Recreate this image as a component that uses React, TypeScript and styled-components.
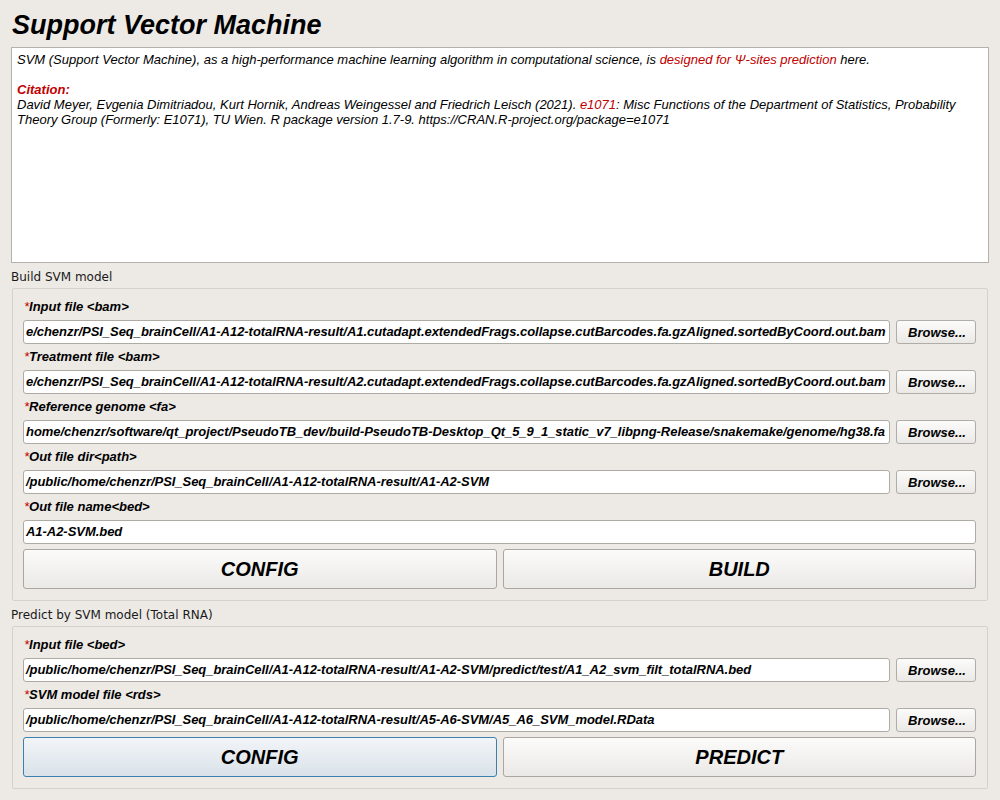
import styled, { createGlobalStyle } from "styled-components";

const GlobalStyle = createGlobalStyle`
  html, body {
    margin: 0;
    padding: 0;
    background: #edeae6;
  }
  * {
    box-sizing: border-box;
  }
`;

const Page = styled.div`
  width: 1000px;
  height: 800px;
  padding: 8px 11px 0 11px;
  background: #edeae6;
  font-family: "Liberation Sans", Arial, sans-serif;
  color: #000;
  overflow: hidden;
`;

const Title = styled.h1`
  margin: 0 0 5px 1px;
  height: 34px;
  font-size: 27px;
  line-height: 35px;
  font-weight: bold;
  font-style: italic;
`;

const Browser = styled.div`
  height: 216px;
  background: #fff;
  border: 1px solid #b4b0aa;
  padding: 4px 5px;
  font-size: 13px;
  line-height: 15px;
  font-style: italic;
`;

const Para = styled.p`
  margin: 0;
  min-height: 15px;
`;

const Red = styled.span<{ $bold?: boolean }>`
  color: #c00000;
  font-weight: ${(p) => (p.$bold ? "bold" : "normal")};
`;

const GroupTitle = styled.div`
  margin-top: 6px;
  margin-bottom: 3px;
  height: 16px;
  line-height: 16px;
  font-family: "DejaVu Sans", sans-serif;
  font-size: 12px;
  color: #1a1a1a;
`;

const Group = styled.div`
  margin: 0 1px;
  border: 1px solid #d5d1cb;
  border-radius: 2px;
  padding: 10px 11px 11px 10px;
  display: flex;
  flex-direction: column;
  gap: 5px;
`;

const Label = styled.div`
  height: 16px;
  line-height: 16px;
  font-size: 13px;
  font-weight: bold;
  font-style: italic;
  padding-left: 1px;
`;

const Star = styled.span`
  color: #c00000;
  font-weight: normal;
`;

const Row = styled.div`
  display: flex;
  gap: 6px;
`;

const Field = styled.div`
  flex: 1;
  height: 24px;
  background: #fff;
  border: 1px solid #aeaaa4;
  border-radius: 3px;
  padding: 0 2px;
  font-size: 13px;
  line-height: 22px;
  font-weight: bold;
  font-style: italic;
  letter-spacing: -0.04px;
  white-space: nowrap;
  overflow: hidden;
`;

const BrowseButton = styled.button`
  width: 80px;
  height: 24px;
  padding: 0 0 0 2px;
  border: 1px solid #b0aca7;
  border-radius: 3px;
  background: linear-gradient(#fbfbfa, #ebe9e6);
  font-family: "Liberation Sans", Arial, sans-serif;
  font-size: 13px;
  font-weight: bold;
  font-style: italic;
  color: #000;
`;

const Actions = styled.div`
  display: flex;
  gap: 6px;
`;

const ActionButton = styled.button<{ $focused?: boolean }>`
  flex: 1;
  height: 40px;
  padding: 0;
  border: 1px solid ${(p) => (p.$focused ? "#3c80b0" : "#aaa6a1")};
  border-radius: 3px;
  background: ${(p) =>
    p.$focused
      ? "linear-gradient(#f2f5f8, #d9e2e9)"
      : "linear-gradient(#fbfbfa, #ebe9e6)"};
  font-family: "Liberation Sans", Arial, sans-serif;
  font-size: 20px;
  font-weight: bold;
  font-style: italic;
  color: #000;
`;

type FileRowProps = {
  label: string;
  value: string;
  browse?: boolean;
};

const FileRow = ({ label, value, browse = true }: FileRowProps) => (
  <>
    <Label>
      <Star>*</Star>
      {label}
    </Label>
    <Row>
      <Field>{value}</Field>
      {browse && <BrowseButton>Browse...</BrowseButton>}
    </Row>
  </>
);

const buildRows: FileRowProps[] = [
  {
    label: "Input file <bam>",
    value:
      "e/chenzr/PSI_Seq_brainCell/A1-A12-totalRNA-result/A1.cutadapt.extendedFrags.collapse.cutBarcodes.fa.gzAligned.sortedByCoord.out.bam",
  },
  {
    label: "Treatment file <bam>",
    value:
      "e/chenzr/PSI_Seq_brainCell/A1-A12-totalRNA-result/A2.cutadapt.extendedFrags.collapse.cutBarcodes.fa.gzAligned.sortedByCoord.out.bam",
  },
  {
    label: "Reference genome <fa>",
    value:
      "home/chenzr/software/qt_project/PseudoTB_dev/build-PseudoTB-Desktop_Qt_5_9_1_static_v7_libpng-Release/snakemake/genome/hg38.fa",
  },
  {
    label: "Out file dir<path>",
    value: "/public/home/chenzr/PSI_Seq_brainCell/A1-A12-totalRNA-result/A1-A2-SVM",
  },
  { label: "Out file name<bed>", value: "A1-A2-SVM.bed", browse: false },
];

const predictRows: FileRowProps[] = [
  {
    label: "Input file <bed>",
    value:
      "/public/home/chenzr/PSI_Seq_brainCell/A1-A12-totalRNA-result/A1-A2-SVM/predict/test/A1_A2_svm_filt_totalRNA.bed",
  },
  {
    label: "SVM model file <rds>",
    value:
      "/public/home/chenzr/PSI_Seq_brainCell/A1-A12-totalRNA-result/A5-A6-SVM/A5_A6_SVM_model.RData",
  },
];

export default function App() {
  return (
    <>
      <GlobalStyle />
      <Page>
        <Title>Support Vector Machine</Title>
        <Browser>
          <Para>
            SVM (Support Vector Machine), as a high-performance machine learning
            algorithm in computational science, is{" "}
            <Red>designed for Ψ-sites prediction</Red> here.
          </Para>
          <Para />
          <Para>
            <Red $bold>Citation:</Red>
          </Para>
          <Para>
            David Meyer, Evgenia Dimitriadou, Kurt Hornik, Andreas Weingessel and
            Friedrich Leisch (2021). <Red>e1071</Red>: Misc Functions of the
            Department of Statistics, Probability Theory Group (Formerly: E1071),
            TU Wien. R package version 1.7-9.
            https://CRAN.R-project.org/package=e1071
          </Para>
        </Browser>

        <GroupTitle>Build SVM model</GroupTitle>
        <Group>
          {buildRows.map((r) => (
            <FileRow key={r.label} {...r} />
          ))}
          <Actions>
            <ActionButton>CONFIG</ActionButton>
            <ActionButton>BUILD</ActionButton>
          </Actions>
        </Group>

        <GroupTitle>Predict by SVM model (Total RNA)</GroupTitle>
        <Group>
          {predictRows.map((r) => (
            <FileRow key={r.label} {...r} />
          ))}
          <Actions>
            <ActionButton $focused>CONFIG</ActionButton>
            <ActionButton>PREDICT</ActionButton>
          </Actions>
        </Group>
      </Page>
    </>
  );
}
